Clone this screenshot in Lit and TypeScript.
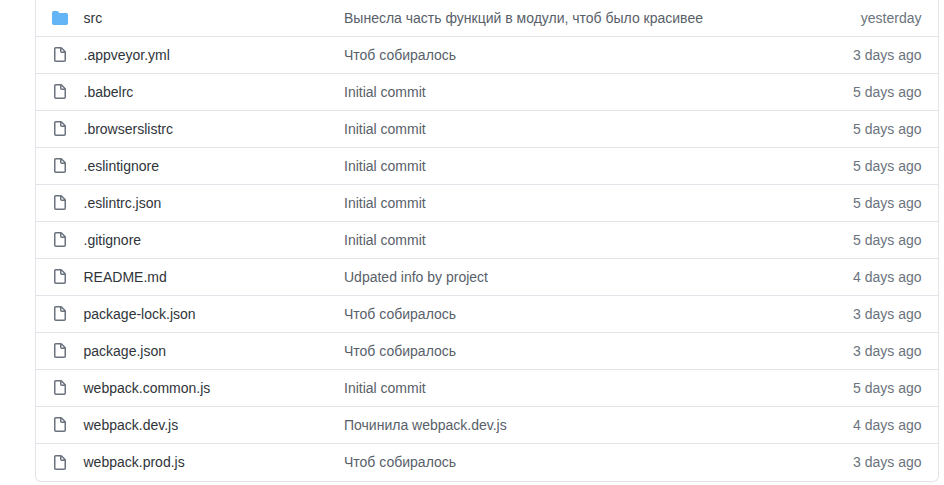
import { LitElement, html, css, svg } from "lit";
import { customElement } from "lit/decorators.js";

const rows: [string, string, string][] = [
  ["src", "Вынесла часть функций в модули, чтоб было красивее", "yesterday"],
  [".appveyor.yml", "Чтоб собиралось", "3 days ago"],
  [".babelrc", "Initial commit", "5 days ago"],
  [".browserslistrc", "Initial commit", "5 days ago"],
  [".eslintignore", "Initial commit", "5 days ago"],
  [".eslintrc.json", "Initial commit", "5 days ago"],
  [".gitignore", "Initial commit", "5 days ago"],
  ["README.md", "Udpated info by project", "4 days ago"],
  ["package-lock.json", "Чтоб собиралось", "3 days ago"],
  ["package.json", "Чтоб собиралось", "3 days ago"],
  ["webpack.common.js", "Initial commit", "5 days ago"],
  ["webpack.dev.js", "Починила webpack.dev.js", "4 days ago"],
  ["webpack.prod.js", "Чтоб собиралось", "3 days ago"],
];

const fileIcon = svg`<path fill-rule="evenodd" d="M3.75 1.5a.25.25 0 00-.25.25v11.5c0 .138.112.25.25.25h8.5a.25.25 0 00.25-.25V6H9.75A1.75 1.75 0 018 4.25V1.5H3.75zm5.75.56v2.19c0 .138.112.25.25.25h2.19L9.5 2.06zM2 1.75C2 .784 2.784 0 3.75 0h5.086c.464 0 .909.184 1.237.513l3.414 3.414c.329.328.513.773.513 1.237v8.086A1.75 1.75 0 0112.25 15h-8.5A1.75 1.75 0 012 13.25V1.75z"/>`;
const folderIcon = svg`<path d="M1.75 1A1.75 1.75 0 000 2.75v10.5C0 14.216.784 15 1.75 15h12.5A1.75 1.75 0 0016 13.25v-8.5A1.75 1.75 0 0014.25 3H7.5a.25.25 0 01-.2-.1l-.9-1.2C6.07 1.26 5.55 1 5 1H1.75z"/>`;

@customElement("app-root")
export class AppRoot extends LitElement {
  static styles = css`
    :host {
      display: block;
      height: 485px;
      overflow: hidden;
      background: #fff;
      font-family: "Liberation Sans", Arial, sans-serif;
      font-size: 14px;
      line-height: 21px;
    }
    .box {
      margin: 0 5.5px 0 35px;
      border: 1px solid #e1e4e8;
      border-top: 0;
      border-radius: 0 0 6px 6px;
    }
    .row {
      display: grid;
      grid-template-columns: 47.5px 260.5px 1fr 100px;
      align-items: center;
      height: 36px;
      border-bottom: 1px solid #e1e4e8;
    }
    .row:last-child {
      border-bottom: 0;
      height: 37px;
      padding-bottom: 0;
    }
    .icon {
      display: flex;
      padding-left: 16px;
    }
    svg {
      width: 16px;
      height: 16px;
      fill: #6a737d;
    }
    svg.dir {
      fill: #64b5f6;
    }
    .name {
      color: #2f3439;
    }
    .msg {
      color: #586069;
    }
    .age {
      color: #6a737d;
      text-align: right;
      padding-right: 16px;
    }
  `;

  render() {
    return html`<div class="box">
      ${rows.map(
        ([n, m, a], i) => html`<div class="row">
          <span class="icon">
            <svg class=${i === 0 ? "dir" : ""} viewBox="0 0 16 16">${i === 0 ? folderIcon : fileIcon}</svg>
          </span>
          <span class="name">${n}</span>
          <span class="msg">${m}</span>
          <span class="age">${a}</span>
        </div>`
      )}
    </div>`;
  }
}
